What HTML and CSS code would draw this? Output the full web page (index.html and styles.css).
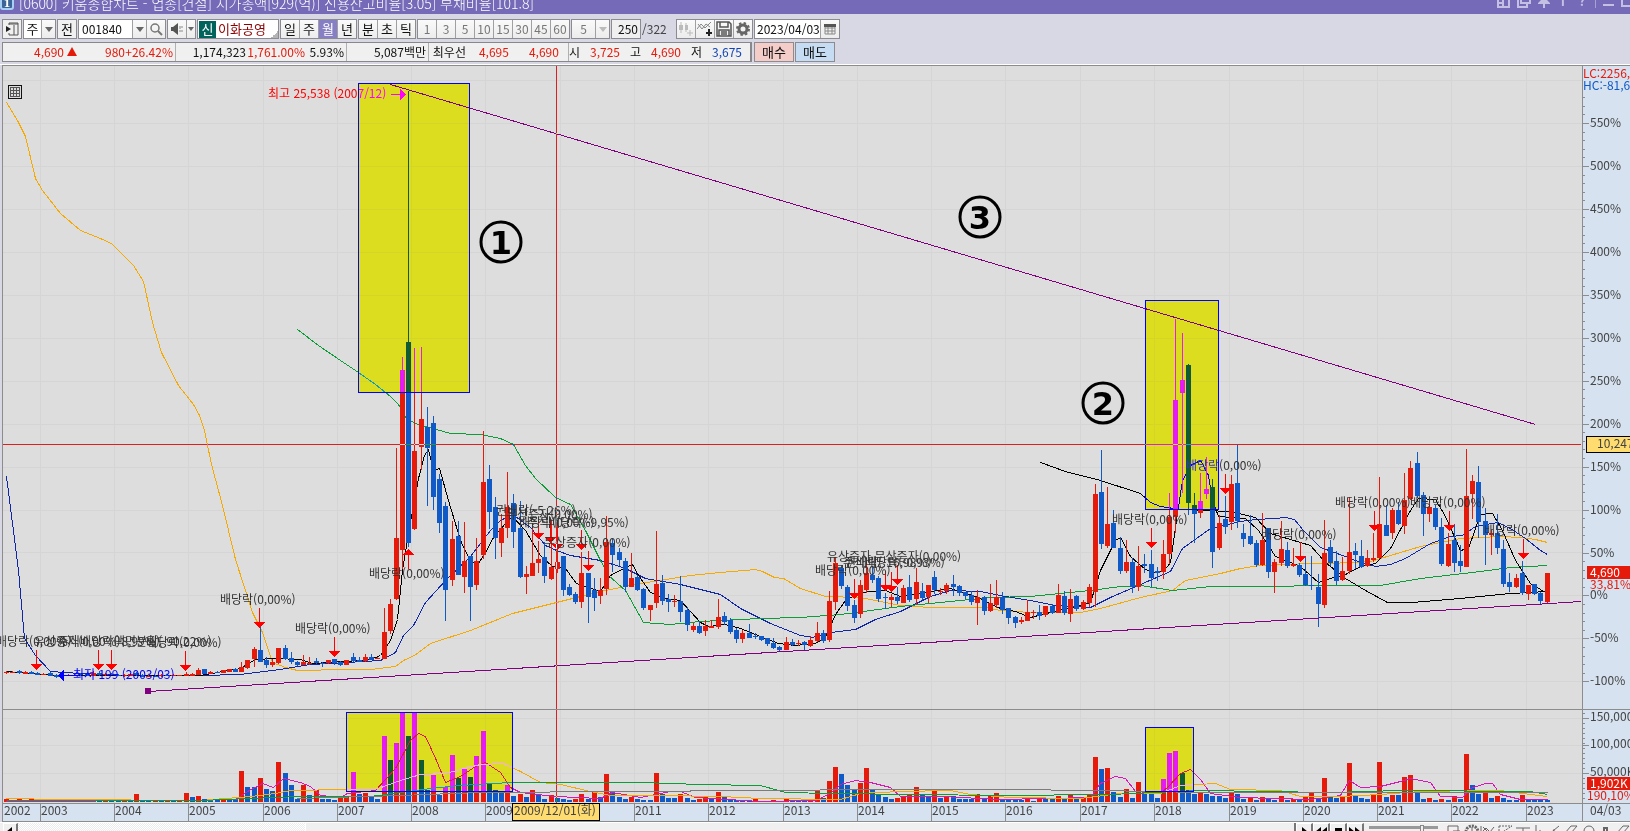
FILE: index.html
```html
<!DOCTYPE html>
<html lang="ko">
<head>
<meta charset="utf-8">
<title>키움종합차트</title>
<link rel="stylesheet" href="styles.css">
</head>
<body>
<header class="titlebar">
  <span class="badge">1</span>
  <h1 class="title">[0600] 키움종합차트 - 업종[건설] 시가총액[929(억)] 신용잔고비율[3.05] 부채비율[101.8]</h1>
  <div class="winbtns">
    <button aria-label="분할"><svg width="13" height="14"><path d="M1 0V13H12V0M1 9H6V13M1 5H6V9" /></svg></button>
    <button aria-label="복사"><svg width="14" height="14"><path d="M4 0V9H13V0M1 3V13H10V10" /></svg></button>
    <button aria-label="고정"><svg width="12" height="14"><path d="M3 0H9V6L12 9V10H0V9L3 6Z" class="solid"/><path d="M6 10V14"/></svg></button>
    <button aria-label="글꼴" class="glyph">I</button>
    <button aria-label="도움말" class="glyph">?</button>
    <i class="bar"></i>
    <button aria-label="최소화"><svg width="11" height="14"><path d="M0 11H11" stroke-width="2"/></svg></button>
    <button aria-label="최대화"><svg width="13" height="14"><path d="M1 0V12H12V0"/></svg></button>
  </div>
</header>

<section class="tools">
  <div class="row">
    <button class="btn w20" aria-label="메뉴"><svg width="14" height="14"><path d="M4 3V1H13V13H4V11M4 2H13M9 3V13" fill="none" stroke="#555"/><path d="M1 4L6 7L1 10Z" fill="#222"/></svg></button>
    <div class="group"><button class="cell white">주</button><button class="cell w14" aria-label="펼치기"><i class="caret"></i></button></div>
    <button class="btn w20">전</button>
    <div class="group"><input class="field code" aria-label="종목코드" value="001840"><button class="cell w14" aria-label="종목 목록"><i class="caret"></i></button><button class="cell" aria-label="검색"><svg width="14" height="14"><circle cx="6" cy="6" r="4" fill="none" stroke="#777" stroke-width="1.5"/><path d="M9 9L13 13" stroke="#777" stroke-width="2"/></svg></button></div>
    <div class="group"><button class="cell" aria-label="음성"><svg width="14" height="14"><path d="M1 5H3L8 1V13L3 9H1Z" fill="#555"/><path d="M10 4V7M10 8V10M12 4V6M12 8V10" stroke="#888"/></svg></button><button class="cell w10" aria-label="음성 설정"><i class="caret small"></i></button></div>
    <div class="group name"><b class="tag">신</b><span>이화공영</span></div>
    <div class="group"><button class="cell">일</button><button class="cell">주</button><button class="cell on">월</button><button class="cell">년</button></div>
    <div class="group"><button class="cell">분</button><button class="cell">초</button><button class="cell">틱</button></div>
    <div class="group dim"><button class="cell">1</button><button class="cell">3</button><button class="cell">5</button><button class="cell">10</button><button class="cell">15</button><button class="cell">30</button><button class="cell">45</button><button class="cell">60</button></div>
    <div class="group dim"><button class="cell w24">5</button><button class="cell w14" aria-label="주기"><i class="caret pale"></i></button></div>
    <input class="field count" aria-label="봉 개수" value="250"><span class="total">/322</span>
    <div class="group icons">
      <button class="cell" aria-label="봉 추가"><svg width="16" height="16"><path d="M1 4H5V9H1ZM7 4H10V9H7Z" fill="#bbb"/><path d="M3 1V12M8 2V11M12 9V15M9 12H15" stroke="#bbb"/></svg></button>
      <button class="cell" aria-label="지표 추가"><svg width="16" height="16"><path d="M0 8L4 3L8 7L14 1M1 3L5 8L9 3L13 6" fill="none" stroke="#888"/><path d="M12 8V15M9 12H15" stroke="#222" stroke-width="2"/></svg></button>
      <button class="cell" aria-label="저장"><svg width="16" height="16"><path d="M1 1H13L15 3V15H1ZM4 1V6H12V1M3 15V9H13V15M5 11H11M5 13H11" fill="none" stroke="#555" stroke-width="1.5"/></svg></button>
      <button class="cell" aria-label="설정"><svg width="16" height="16"><circle cx="8" cy="8" r="4" fill="none" stroke="#666" stroke-width="3"/><circle cx="8" cy="8" r="6" fill="none" stroke="#666" stroke-width="2" stroke-dasharray="2.4 2.3"/></svg></button>
    </div>
    <div class="group"><input class="field date" aria-label="날짜" value="2023/04/03"><button class="cell" aria-label="달력"><svg width="14" height="14"><path d="M2 3H12V12H2ZM2 6H12M2 9H12M5 4V12M9 4V12" fill="none" stroke="#888"/><path d="M1 2H13V5H1Z" fill="#555"/></svg></button></div>
  </div>
  <div class="row">
    <div class="quote">
      <div class="q up q1"><span>4,690</span><i class="tri"></i><span class="p48">980</span><span class="p48">+26.42%</span></div>
      <div class="q q2"><span>1,174,323</span><span class="up p59">1,761.00%</span><span class="p39">5.93%</span></div>
      <div class="q q3"><span>5,087백만</span></div>
      <div class="q q4"><span class="lead">최우선</span><span class="up p43">4,695</span><span class="up p50">4,690</span></div>
      <div class="q q5"><span>시</span><span class="up p40">3,725</span><span class="gap">고</span><span class="up p40">4,690</span><span class="gap">저</span><span class="down p40">3,675</span></div>
    </div>
    <button class="trade buy">매수</button>
    <button class="trade sell">매도</button>
  </div>
</section>

<main class="chart"><svg id="chart" role="img" aria-label="이화공영 월봉 차트"></svg></main>

<footer class="bottom">
  <button class="tiny" aria-label="왼쪽"><svg width="12" height="14"><path d="M8 2V12L2 7Z"/></svg></button>
  <div class="track"></div>
  <div class="thumb"></div>
  <div class="play">
    <button class="tiny" aria-label="재생"><svg width="14" height="14"><path d="M5 2V12L11 7Z"/></svg></button>
    <button class="tiny" aria-label="뒤로"><svg width="14" height="14"><path d="M7 2V12L1 7ZM13 2V12L7 7Z"/></svg></button>
    <button class="tiny" aria-label="정지"><svg width="14" height="14"><path d="M4 3H11V12H4Z"/></svg></button>
    <button class="tiny" aria-label="앞으로"><svg width="14" height="14"><path d="M1 2V12L7 7ZM7 2V12L13 7Z"/></svg></button>
  </div>
  <div class="slider"><i></i></div>
  <svg class="draw" width="184" height="14"><g fill="none" stroke="#666">
    <path d="M2 12V3H12V9M7 8H14"/><path d="M20 9A6 6 0 0 1 32 9" stroke-width="3" stroke-dasharray="2 1"/><path d="M26 9V4"/>
    <path d="M35 3V12M35 10L40 5L44 9L48 4M37 4L42 9L47 9"/><path d="M53 3H66M53 3V12M55 10L66 3" stroke-dasharray="2 1"/>
    <path d="M70 5H84M77 5V12"/><path d="M90 2V12M94 7V12L97 12"/><path d="M102 12L113 3M108 6V12"/>
    <path d="M119 10L125 3H131L125 10ZM122 10V12"/><path d="M138 12V8A5 5 0 0 1 148 8V12"/><path d="M158 12V5H161V12" stroke-width="2"/><path d="M171 10L177 3H183L177 10Z"/>
  </g></svg>
</footer>
<script src="chart.js"></script>
</body>
</html>
```
FILE: styles.css
```css
* { box-sizing: border-box; }
html, body { height: 100%; }
body {
  margin: 0;
  display: flex;
  flex-direction: column;
  overflow: hidden;
  background: #d8d7e4;
  color: #111;
  font: 13px/16px "Noto Sans CJK KR", sans-serif;
}
button, input { font: inherit; color: inherit; margin: 0; padding: 0; border: 0; background: none; }
svg { display: block; }

.titlebar {
  height: 14px;
  flex: none;
  display: flex;
  align-items: flex-end;
  overflow: hidden;
  background: #746ab8;
  color: #fff;
}
.badge {
  width: 14px;
  height: 16px;
  margin-bottom: 4px;
  border: 2px solid #a8d0f4;
  border-radius: 3px;
  background: #3c6496;
  font: bold 13px/13px "Liberation Serif", serif;
  text-align: center;
}
.title { margin: 0 auto 3px 5px; font-size: 14px; font-weight: 300; line-height: 16px; white-space: pre; }
.winbtns { display: flex; align-items: flex-end; gap: 7px; height: 14px; margin-right: -4px; padding-bottom: 6px; }
.winbtns svg { stroke: #c4c0e4; stroke-width: 2; fill: none; }
.winbtns .solid { fill: #c4c0e4; stroke: none; }
.winbtns .glyph { width: 12px; line-height: 14px; font-weight: bold; color: #c4c0e4; }
.winbtns .bar { width: 1px; height: 14px; background: #a8a2d4; }

.tools { flex: none; display: flex; flex-direction: column; gap: 3px; padding: 5px 2px 2px; }
.row { display: flex; gap: 1px; height: 20px; }
.btn, .group, .field.count { border: 1px solid #8c8c90; background: #f0f0f0; }
.btn { display: flex; align-items: center; justify-content: center; }
.w20 { width: 20px; }
.group { display: flex; }
.cell {
  width: 19px;
  display: flex;
  align-items: center;
  justify-content: center;
  line-height: 18px;
  background: linear-gradient(#fafafa, #ececec);
}
.cell:first-child { width: 18px; }
.cell + .cell, .field + .cell { border-left: 1px solid #a0a0a4; }
.cell.white { width: 17px; background: #fff; }
.cell.w14 { width: 14px; }
.cell.w10 { width: 9px; }
.cell.w24 { width: 23px; }
.cell.on { background: #877fc4; color: #fff; }
.dim { color: #777; font-size: 12px; }
.caret { border: 4px solid transparent; border-top: 5px solid #666; border-bottom: 0; }
.caret.small { border-width: 4px 3px 0; }
.caret.pale { border-top-color: #bbb; }
.field { background: #fff; font-size: 12px; }
.code { width: 53px; padding-left: 3px; }
.name {
  width: 82px;
  align-items: center;
  gap: 2px;
  color: #8c0000;
  background: #fff linear-gradient(135deg, transparent 50%, #b4b4b4 50%) no-repeat 100% 100% / 7px 7px;
}
.tag { width: 17px; height: 17px; margin-left: 1px; background: #00645c; color: #fff; font-weight: 400; line-height: 16px; text-align: center; }
.count { width: 30px; text-align: right; padding-right: 2px; }
.total { width: 33px; line-height: 19px; color: #444; font-size: 12px; }
.date { width: 65px; padding-left: 2px; }

.quote { flex: none; display: flex; width: 750px; border: 1px solid #88888c; border-right-width: 2px; background: #f0f0f0; font-size: 12px; line-height: 18px; }
.q { display: flex; justify-content: flex-end; padding-right: 2px; white-space: nowrap; }
.q + .q { border-left: 1px solid #b0b0b0; }
.q span { text-align: right; }
.q1 { width: 172px; }
.q2 { width: 171px; }
.q3 { width: 82px; }
.q4 { width: 140px; padding-right: 9px; }
.q5 { flex: 1; padding-right: 8px; }
.tri { margin: 4px 0 0 3px; width: 10px; height: 9px; background: #e61a0a; clip-path: polygon(50% 0, 100% 100%, 0 100%); }
.p39 { width: 39px; } .p40 { width: 40px; } .p43 { width: 43px; } .p48 { width: 48px; } .p50 { width: 50px; } .p59 { width: 59px; }
.q .gap { width: 21px; }
.up { color: #e61a0a; }
.down { color: #1044b8; }
.trade { width: 40px; border: 1px solid #8c8c90; }
.buy { background: #f4ccc8; margin-left: 1px; }
.sell { background: #c6dcf2; }

.chart { flex: 1; min-height: 0; border-top: 1px solid #fff; }
.chart svg { width: 100%; height: 100%; shape-rendering: crispEdges; font: 12px "Noto Sans CJK KR", sans-serif; }
.chart text { white-space: pre; }
.chart .note { fill: #333; }
.chart .axis { fill: #444; }
.chart .invert { mix-blend-mode: difference; }
.chart .ring { fill: none; stroke: #000; stroke-width: 3; shape-rendering: auto; }
.chart .num { font: bold 32px "DejaVu Sans", sans-serif; text-anchor: middle; }

.bottom { flex: none; height: 9px; display: flex; overflow: hidden; padding-left: 3px; background: #f0f0f0; border-top: 1px solid #fff; align-items: flex-start; }
.tiny { width: 15px; height: 17px; border: 1px solid #fff; border-right: 2px solid #777; background: #f0f0f0; }
.track { width: 287px; height: 16px; background: repeating-conic-gradient(#fff 0 25%, #ececec 0 50%) 0 0 / 2px 2px; }
.thumb { flex: 1; height: 16px; border-left: 1px solid #fff; border-right: 2px solid #777; }
.play { display: flex; }
.play .tiny { width: 17px; }
.slider { width: 69px; height: 10px; margin: 3px 8px 0 5px; border-top: 3px solid #999; display: flex; justify-content: flex-end; }
.slider i { width: 4px; height: 12px; margin: -4px 14px 0 0; background: #f0f0f0; border: 1px solid #888; }
```
FILE: chart.js
```javascript
// colour, high, open/close top, open/close bottom, low, top of volume bar
const DATA = `
r 671 672 673 674 799|r 671 672 673 673 800|b 670 671 673 674 799|r 671 672 674 674 800|b 671 672 674 674 799|b 672 673 675 675 800|r 673 674 675 675 800|b 672 673 676 676 799|b 674 675 677 678 801|b 674 675 676 677 801|
r 674 675 676 676 800|r 674 675 676 676 801|b 673 674 675 676 800|b 673 674 676 676 799|r 671 673 676 676 800|b 671 673 675 676 801|r 673 674 675 676 800|b 673 674 675 675 800|b 674 675 676 676 801|r 674 675 676 677 800|
r 673 674 676 676 800|b 672 673 675 676 794|b 674 675 677 677 800|r 675 676 677 677 801|b 675 676 677 677 800|r 674 675 676 677 801|b 674 675 676 676 800|r 674 675 676 676 801|r 675 675 676 676 800|r 672 674 676 676 793|
r 673 674 676 676 797|r 668 670 675 675 796|b 669 669 674 674 799|r 671 672 674 674 799|b 671 672 673 673 800|r 670 670 673 673 799|r 669 669 672 672 799|b 668 669 672 672 800|r 662 667 672 672 771|r 660 660 668 669 787|
r 647 649 659 667 787|b 627 650 662 662 778|b 657 660 665 668 789|r 659 662 665 667 791|r 648 648 663 664 762|b 645 648 659 660 773|b 652 658 662 664 785|b 661 662 665 666 799|r 655 662 665 665 785|r 657 663 664 665 795|
b 658 661 663 664 790|b 662 663 664 667 799|r 660 660 663 664 799|b 659 659 663 665 800|b 661 662 665 666 797|r 660 660 665 665 796|b 653 657 661 662 772|b 657 660 662 662 794|r 654 657 661 662 793|b 654 657 660 660 796|
r 657 658 659 659 799|r 608 632 659 659 736|r 599 604 631 634 760|r 448 538 599 600 743|r 357 370 550 569 713|b 91 342 543 547 736|r 348 451 529 530 713|r 347 419 447 470 760|b 407 427 448 506 790|b 416 423 497 510 775|
b 474 479 523 533 795|b 502 506 590 621 787|r 521 539 580 586 755|b 521 536 575 575 778|r 522 561 577 593 769|b 556 556 587 621 777|r 538 561 585 590 756|r 431 482 555 559 731|b 465 479 512 529 784|b 497 507 538 559 790|
r 514 528 543 557 791|r 472 507 528 538 785|b 494 503 532 548 796|b 501 528 577 578 794|r 566 574 577 594 797|r 523 563 576 576 790|r 541 559 563 573 795|b 542 557 576 583 799|r 520 567 579 580 795|r 520 562 569 573 798|
b 556 556 590 596 799|b 584 587 595 596 800|b 592 594 602 604 799|r 552 573 602 608 794|b 573 573 597 623 799|b 578 590 598 611 791|r 578 590 596 604 797|r 516 542 589 595 774|b 539 543 555 572 792|b 548 552 560 566 797|
b 558 561 587 592 799|r 553 578 587 587 797|b 575 577 590 591 799|b 588 589 608 610 800|r 605 605 610 621 800|r 531 584 603 608 773|b 575 583 601 605 794|b 594 599 602 612 798|r 595 601 602 607 798|b 576 601 612 622 794|
b 607 610 625 631 798|r 623 626 630 632 800|b 621 626 633 634 799|r 620 626 631 636 797|r 620 626 628 628 799|r 599 617 627 629 792|b 612 616 622 625 797|b 618 620 632 634 800|b 628 630 639 643 800|r 630 633 639 643 800|
b 624 633 638 638 800|b 633 636 637 639 799|b 636 636 640 641 801|b 638 638 644 646 801|b 638 643 648 649 800|b 646 647 650 651 801|r 637 642 650 650 798|b 639 642 645 646 801|r 640 643 644 646 801|b 641 642 645 650 801|
r 636 640 646 647 800|r 622 633 641 642 790|b 630 633 641 643 798|r 591 601 640 642 781|r 557 563 602 610 767|b 565 568 586 589 774|b 585 587 606 611 785|b 600 605 618 623 789|r 580 585 614 618 783|r 561 573 590 593 768|
b 567 575 580 583 789|b 576 578 599 602 794|b 593 597 598 609 797|r 594 597 600 607 799|b 587 597 601 604 798|r 585 588 603 603 796|b 575 587 600 602 795|r 568 582 599 605 787|b 583 591 598 600 795|r 585 585 597 603 796|
b 571 577 590 594 791|r 588 591 592 595 798|r 583 585 591 594 796|b 575 584 587 596 796|b 585 586 593 596 799|b 592 592 596 599 799|b 591 595 602 605 799|r 590 597 603 625 794|b 596 597 611 615 799|r 584 603 611 612 796|
r 580 597 605 608 793|b 592 597 610 614 799|b 608 608 618 624 800|b 616 617 623 628 800|r 617 620 622 624 800|r 600 612 621 621 799|r 610 612 613 619 801|b 605 612 616 620 799|r 606 606 615 617 799|b 604 606 613 614 799|
r 584 595 613 613 796|b 591 596 613 615 799|r 589 599 614 622 794|b 595 596 609 611 799|r 600 602 609 610 798|r 584 587 603 607 794|r 484 494 592 607 757|b 450 492 544 549 769|r 487 524 546 548 768|b 510 523 548 548 792|
b 537 548 571 574 797|r 540 562 571 573 789|b 558 562 587 593 798|r 546 566 587 591 782|b 554 564 566 573 793|b 550 564 578 587 793|b 567 571 573 581 798|r 540 554 572 579 779|r 493 517 554 564 753|r 319 400 517 533 751|
r 333 380 393 493 773|b 364 365 503 515 790|b 493 505 514 543 794|r 473 501 513 518 792|r 457 489 494 499 794|b 479 487 552 568 796|r 515 523 548 550 796|b 496 519 527 534 798|r 475 484 522 530 793|b 445 483 521 528 794|
b 524 533 539 547 799|b 515 536 544 545 798|b 540 543 565 567 800|r 513 540 565 566 797|b 528 528 572 578 799|r 559 562 572 593 800|r 521 549 563 566 796|b 542 550 566 568 800|r 548 564 566 567 799|b 563 565 575 577 800|
b 556 574 585 586 797|b 556 585 586 590 792|b 574 587 604 627 799|r 520 553 605 608 778|b 540 547 563 566 796|b 551 561 581 585 798|r 557 571 580 581 797|r 497 552 571 574 763|b 543 551 555 569 796|b 540 556 567 568 798|
r 550 558 566 567 799|r 533 558 560 562 794|r 477 524 558 559 762|b 505 525 536 536 797|r 508 510 533 539 795|b 502 510 524 525 795|r 473 500 526 534 777|r 461 468 499 500 775|b 452 463 496 498 792|b 492 495 514 536 799|
r 501 507 514 522 798|b 505 508 527 530 800|b 518 527 564 566 799|r 533 544 566 567 800|b 524 540 563 572 796|b 545 561 566 572 799|r 449 496 567 567 754|r 475 481 494 519 785|b 466 482 522 538 794|b 508 521 535 565 792|
r 530 533 535 555 798|b 514 533 548 554 796|b 540 549 584 587 798|b 573 582 587 592 800|r 574 578 587 588 800|b 561 573 593 595 795|r 585 585 594 600 800|b 584 584 594 595 800|b 592 593 601 604 800|r 573 573 602 603 800`
  .replace(/\n/g, '').split('|').map(s => s.split(' ').map((v, i) => i ? +v : v));

const RED = '#e61a0a', BLUE = '#105ac8';

const LINES = [
  ['#f4aa00', '6,102 17,120 25,136 35,178 42,190 60,213 80,230 100,238 111,243 133,265 143,281 152,322 161,352 178,385 193,404 199,415 204,430 211,464 222,505 235,559 252,612 262,632 272,662 285,667 297,670 345,669 370,669 395,666 403,660 414,655 430,643 470,630 512,613 556,602 600,591 640,583 690,575 720,572 755,569 762,571 774,577 783,578 800,588 825,596 860,597 900,605 930,607 985,607 1000,610 1030,612 1080,612 1100,608 1140,597 1172,590 1185,580 1220,573 1240,568 1260,565 1310,563 1330,563 1370,561 1390,555 1420,546 1460,538 1500,536 1520,537 1535,539 1547,542'],
  ['#1028a8', '6,476 18,570 24,638 35,655 50,671 80,673 130,675 200,675 240,674 280,669 310,664 330,663 380,660 395,652 403,635 413,625 425,602 445,580 470,556 490,530 500,520 512,514 530,527 545,545 556,550 570,555 600,560 625,568 645,578 680,584 720,594 740,608 770,623 800,635 812,637 830,632 855,629 875,619 900,611 930,596 950,590 980,591 1005,596 1030,600 1055,605 1090,607 1110,597 1140,584 1170,571 1182,548 1210,528 1240,521 1255,519 1275,518 1285,517 1294,519 1303,530 1320,547 1345,556 1360,562 1375,566 1390,564 1405,558 1430,543 1450,536 1462,535 1475,526 1497,522 1510,528 1525,538 1540,550 1547,554'],
  ['#0c9c38', '297,329 318,345 340,360 358,372 375,384 390,396 398,404 406,418 415,423 450,433 480,434 500,438 513,444 525,465 535,478 555,497 570,504 585,530 600,560 608,575 625,590 643,622 670,624 700,621 760,618 800,617 840,614 900,606 960,600 990,597 1030,596 1090,590 1120,586 1140,585 1172,590 1210,586 1380,585 1420,578 1480,571 1510,567 1547,565'],
  ['#000', '6,671 30,673 60,675 200,675 240,668 255,659 275,658 300,659 312,663 345,661 370,659 380,655 390,640 397,619 402,570 411,516 418,478 424,455 428,449 433,470 439,468 448,500 460,540 470,561 478,563 485,552 493,537 505,523 512,516 525,530 540,555 552,566 565,568 576,583 600,591 610,575 625,567 632,564 638,575 650,592 665,598 680,600 700,622 708,626 725,624 740,628 765,638 778,643 795,645 815,643 825,637 835,614 845,600 860,592 885,590 900,596 925,592 950,588 975,596 1000,608 1015,611 1030,617 1050,612 1080,605 1090,602 1100,570 1115,540 1120,537 1130,556 1145,569 1155,572 1163,571 1170,562 1176,520 1182,480 1190,465 1200,460 1208,475 1212,500 1218,516 1230,517 1245,518 1258,530 1275,556 1300,566 1318,582 1330,578 1345,574 1360,566 1375,563 1390,548 1410,510 1418,498 1435,499 1445,516 1460,550 1468,548 1480,514 1492,513 1502,530 1515,560 1530,583 1545,592'],
  ['#000', '1040,462 1065,471 1100,480 1140,493 1150,502 1160,506 1180,509 1230,511 1255,517 1270,533 1310,545 1325,562 1345,578 1365,590 1387,602 1412,602 1460,598 1510,593 1547,591']
];
const VOLUME_LINES = [
  ['#d818b4', '6,801 185,800 235,799 247,791 262,783 273,787 283,778 300,782 310,786 320,795 340,797 347,793 375,790 395,768 410,740 418,733 425,736 436,760 445,782 460,776 475,766 485,762 500,772 510,787 520,792 555,796 600,798 612,792 640,797 670,791 680,791 695,797 760,801 815,800 830,793 840,784 855,780 870,782 890,787 900,796 940,796 1000,799 1090,797 1100,783 1115,776 1125,778 1135,791 1160,793 1168,786 1180,773 1190,769 1200,779 1210,793 1240,797 1310,799 1340,795 1349,780 1360,787 1380,786 1400,781 1410,778 1430,782 1440,796 1462,797 1470,788 1485,783 1492,783 1500,794 1520,799 1547,799'],
  ['#f4aa00', '6,798 60,799 200,800 250,796 275,793 290,790 345,789 378,788 400,780 420,774 445,773 460,769 480,764 503,763 520,771 540,782 560,784 590,791 610,795 660,795 720,796 760,798 840,799 860,793 900,791 950,790 970,794 1010,797 1080,798 1120,793 1160,793 1180,785 1215,783 1230,789 1280,790 1300,796 1340,796 1380,794 1420,791 1480,790 1500,790 1530,794 1547,796'],
  ['#0c9c38', '6,800 200,800 300,796 370,796 400,792 430,788 460,785 510,782 640,782 700,784 760,785 785,792 830,793 1000,795 1110,794 1200,790 1330,792 1400,790 1530,791 1547,794'],
  ['#7c7c7c', '297,798 400,795 480,792 620,791 760,790 880,789 1000,789 1100,790 1200,792 1547,792']
];
const ARROWS = [[36,650],[98,650],[111,650],[185,651],[259,608],[334,637],[538,519],[550,523],[557,530],[581,530],[588,551],
  [854,579],[885,571],[891,572],[897,565],[1151,528],[1225,474],[1300,542],[1374,511],[1449,511],[1523,539]];
const DIV = '배당락(0,00%)';
const NOTES = [[-4,646,DIV],[34,646,'유상증자(0,00%)'],[58,646,'주식배당락(-8,99%)'],[114,646,'액면분할(-90,22%)'],[146,647,DIV],[220,604,DIV],[295,633,DIV],[369,578,DIV],
  [496,515,'권배락(-5,26%)'],[506,519,'유상증자(0,00%)'],[519,527,DIV],[527,527,'주식배당락(-9,95%)'],[544,547,'무상증자(0,00%)'],
  [815,575,DIV],[827,561,'유상증자 무상증자(0,00%)'],[843,567,'주식배당락(-0,93%)'],[845,567,'권배락(-16,98%)'],
  [1112,524,DIV],[1186,470,DIV],[1261,539,DIV],[1335,507,DIV],[1410,507,DIV],[1484,535,DIV]];

const svg = document.getElementById('chart');

function draw() {
  const kx = svg.clientWidth / 1630, ky = svg.clientHeight / 757;
  const X = x => x * kx, Y = y => (y - 65) * ky;
  const out = [];
  const rect = (x, y, w, h, fill, extra = '') =>
    out.push(`<rect x="${X(x)}" y="${Y(y)}" width="${w * kx}" height="${h * ky}" fill="${fill}" ${extra}/>`);
  const text = (x, y, s, cls = 'axis', extra = '') =>
    out.push(`<text x="${X(x)}" y="${Y(y)}" class="${cls}" ${extra}>${s}</text>`);
  const poly = ([c, pts], w = 1) => out.push(`<polyline fill="none" stroke="${c}" stroke-width="${w}" points="${
    pts.split(' ').map(p => { const [a, b] = p.split(','); return X(+a + .5) + ',' + Y(+b + .5); }).join(' ')}"/>`);
  const column = i => Math.floor(6.7 + i * 6.186);
  const YEARS = [40,114,188,263,337,411,485,560,634,708,783,857,931,1005,1080,1154,1229,1303,1377,1451,1526];

  // panels and grid
  rect(0, 65, 1630, 757, '#d8d7e4');
  rect(2, 65, 1580, 738, '#dddddd');
  rect(1582, 65, 48, 757, '#d6e2f0');
  rect(2, 803, 1580, 19, '#d6e2f0');
  YEARS.forEach(x => rect(x, 66, 1, 737, '#d5d5d5'));
  for (let i = 0; i < 15; i++) rect(3, Math.round(80 + i * 42.95), 1579, 1, '#d5d5d5');
  [718, 745, 773].forEach(y => rect(3, y, 1579, 1, '#d5d5d5'));

  // averages under the candles
  LINES.forEach(l => poly(l));
  DATA.forEach(([c, hi, top, bot, lo], i) => {
    const x = column(i), fill = c === 'r' ? RED : BLUE;
    rect(x, hi, 1, lo - hi, fill);
    rect(x - 2, top, 5, bot - top, fill);
  });
  DATA.forEach((d, i) => {
    const up = !i || d[5] < DATA[i - 1][5];
    rect(column(i) - 2, d[5], 5, 802 - d[5], up ? RED : BLUE);
  });
  VOLUME_LINES.forEach(l => poly(l));

  // trend lines
  poly(['#800080', '390,84 1535,424']);
  poly(['#800080', '148,691 1581,601']);
  rect(145, 688, 6, 6, '#800080');

  // event marks
  ARROWS.forEach(([x, y]) => {
    rect(x, y, 1, 15, '#f00');
    out.push(`<path fill="#f00" d="M${X(x - 5)} ${Y(y + 14)}h11l-5.5 6z"/>`);
  });
  rect(408, 554, 1, 15, '#f00');
  out.push(`<path fill="#f00" d="M${X(403)} ${Y(555)}h11l-5.5 -6z"/>`);
  NOTES.forEach(([x, y, s]) => text(x, y, s, 'note'));
  text(268, 98, '최고 25,538 (2007/12)', '', 'fill="#f00"');
  rect(391, 94, 10, 1, '#f00');
  out.push(`<path fill="#f00" d="M${X(400)} ${Y(89)}v11l6 -5.5z"/>`);
  text(73, 679, '최저 199 (2003/03)', '', 'fill="#00f"');
  rect(63, 675, 16, 1, '#00f');
  out.push(`<path fill="#00f" d="M${X(64)} ${Y(670)}v11l-6 -5.5z"/>`);

  // highlighted ranges
  [[358,83,111,309],[1145,300,73,209],[346,712,166,79],[1145,727,48,64]].forEach(([x, y, w, h]) => {
    rect(x, y, w, h, '#0000fc', 'class="invert"');
    out.push(`<rect x="${X(x + .5)}" y="${Y(y + .5)}" width="${w * kx}" height="${h * ky}" fill="none" stroke="#00f"/>`);
  });

  // cross hair
  rect(3, 444, 1578, 1, '#00fcfc', 'class="invert"');
  rect(556, 66, 1, 737, '#00fcfc', 'class="invert"');

  // frames
  rect(2, 65, 1628, 1, '#8c8c8c');
  rect(2, 65, 1, 757, '#8c8c8c');
  rect(1582, 65, 1, 757, '#8c8c8c');
  rect(2, 709, 1628, 1, '#8c8c8c');
  rect(2, 803, 1628, 1, '#8c8c8c');
  rect(2, 821, 1628, 1, '#8c8c8c');

  // value axis
  text(1583, 78, 'LC:2256,48', '', `fill="${RED}"`);
  text(1583, 90, 'HC:-81,64', '', `fill="${BLUE}"`);
  for (let i = 0; i < 14; i++) {
    const y = 123 + i * 42.95;
    rect(1583, Math.round(y), 6, 1, '#8c8c8c');
    for (let k = 1; k < 5; k++) if (i || k < 4) rect(1583, Math.round(y - k * 8.6), 2, 1, '#8c8c8c');
    text(1590, Math.round(y) + 4, (550 - i * 50) + '%');
  }
  [[718,'150,000K'],[745,'100,000K'],[773,'50,000K']].forEach(([y, s]) => {
    rect(1583, y, 6, 1, '#8c8c8c');
    text(1590, y + 3, s);
  });
  for (let y = 713; y < 802; y += 5) rect(1583, y, 2, 1, '#8c8c8c');
  rect(1586, 436, 60, 17, '#000');
  rect(1587, 437, 60, 15, '#ffdc70');
  text(1597, 448, '10,247');
  rect(1587, 566, 43, 13, RED);
  text(1590, 577, '4,690', '', 'fill="#fff"');
  text(1590, 589, '33,81%', '', `fill="${RED}"`);
  rect(1587, 777, 43, 13, RED);
  text(1590, 788, '1,902K', '', 'fill="#fff"');
  text(1587, 800, '190,10%', '', `fill="${RED}"`);

  // time axis
  text(4, 815, '2002');
  YEARS.forEach((x, i) => { rect(x, 804, 1, 17, '#8c8c8c'); text(x + 1, 815, 2003 + i); });
  rect(512, 803, 88, 18, '#000');
  rect(513, 804, 86, 16, '#ffdc70');
  text(514, 815, '2009/12/01(화)');
  text(1590, 815, '04/03');

  // numbered callouts
  [[501,242,1],[1103,403,2],[980,217,3]].forEach(([x, y, n]) => {
    out.push(`<circle class="ring" cx="${X(x)}" cy="${Y(y)}" r="20"/>`);
    text(x, y + 12, n, 'num');
  });

  // panel settings mark
  out.push(`<path transform="translate(${X(8)} ${Y(85)})" fill="none" stroke="#111" d="M.5 .5h13v13h-13z"/>`);
  out.push(`<path transform="translate(${X(8)} ${Y(85)})" fill="none" stroke="#555" d="M2.5 2.5h9v9h-9zM2.5 5.5h9M2.5 8.5h9M5.5 2.5v9M8.5 2.5v9"/>`);
  svg.innerHTML = out.join('');
}
draw();
addEventListener('resize', draw);
```
